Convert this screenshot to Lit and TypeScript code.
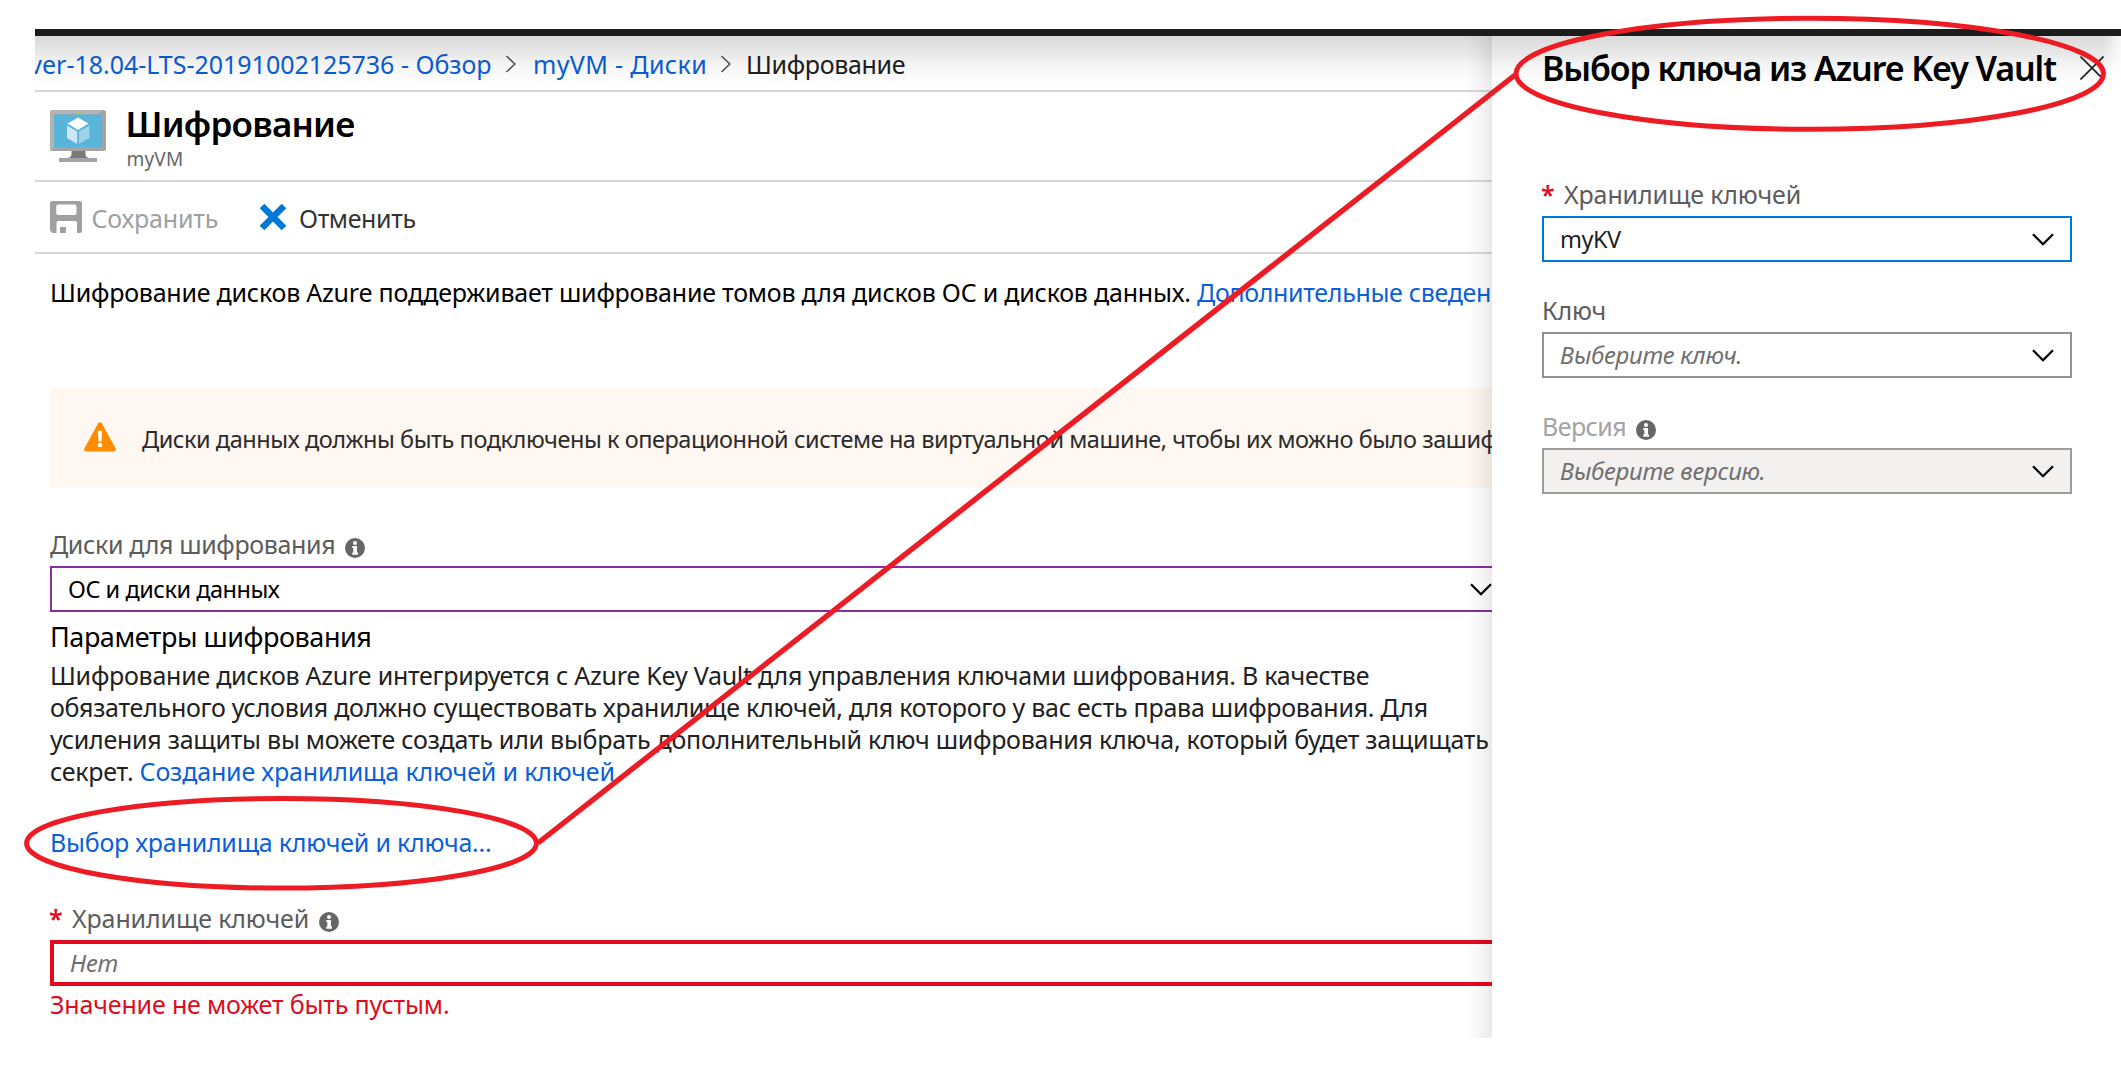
import { LitElement, html, css, svg } from 'lit';
import { customElement, property } from 'lit/decorators.js';
import { classMap } from 'lit/directives/class-map.js';

const chevronRight = html`<svg class="crumb-sep" viewBox="0 0 12 18" width="12" height="18">
  <path d="M1.5 1 9.8 9 1.5 17" fill="none" stroke="#5f5f5f" stroke-width="1.7" />
</svg>`;

const vmIcon = html`<svg viewBox="0 0 56 52" width="56" height="52">
  <rect x="0" y="0" width="56" height="41" rx="2.5" fill="#a3a3a3" />
  <path d="M0 2.5Q0 0 2.5 0H53L48 4.5H4V38L1 41Q0 40 0 38.5Z" fill="#b3b3b3" />
  <rect x="4" y="4.5" width="48" height="32.5" fill="#59b4d9" />
  <circle cx="28" cy="2.6" r="1" fill="#b8d432" />
  <path d="M28 7.5 38.5 13.5 28 20 17.5 13.5Z" fill="#fff" />
  <path d="M17 15.5 27.2 21.5V34L17 28Z" fill="#cde8f4" />
  <path d="M39.5 15.5 29 21.5V34L39.5 28Z" fill="#9fd3ea" />
  <path d="M21.5 41H35.5V44.5Q36 47.5 39 48H17.5Q21 47.5 21.5 44.5Z" fill="#7a7a7a" />
  <rect x="9" y="48" width="38" height="4" fill="#a3a3a3" />
</svg>`;

const saveIcon = html`<svg viewBox="0 0 32 32" width="32" height="32">
  <path fill-rule="evenodd" fill="#a0a0a0"
    d="M2.5 0H29.5Q32 0 32 2.500V29.500Q32 32 29.500 32H27V22Q27 20 25 20H8.500Q6.500 20 6.500 22V32H2.500L0 29.500V2.500Q0 0 2.500 0ZM8.200 3.500Q6.200 3.500 6.200 5.500V12Q6.200 14 8.200 14H24.500Q26.500 14 26.500 12V5.500Q26.500 3.500 24.500 3.500Z" />
  <rect x="10" y="26" width="6" height="6" fill="#a0a0a0" />
</svg>`;

const cancelIcon = html`<svg viewBox="0 0 28 28" width="28" height="28">
  <path d="M3 3 25 25M25 3 3 25" stroke="#0078d7" stroke-width="6.600" fill="none" />
</svg>`;

const warningIcon = html`<svg viewBox="0 0 32 30" width="32" height="30">
  <path d="M14.200 1.200Q16 -0.800 17.800 1.200L31.700 26.500Q32.300 29.300 29.700 29.500H2.300Q-0.300 29.300 0.300 26.500Z" fill="#ff8c00" />
  <path d="M13.900 8.800H18.100L17.500 19.500H14.500Z" fill="#fff" />
  <circle cx="16" cy="23" r="2.300" fill="#fff" />
</svg>`;

const infoIcon = html`<svg class="info" viewBox="0 0 20 20" width="20" height="20">
  <circle cx="10" cy="10" r="10" fill="#666" />
  <circle cx="10" cy="5" r="2" fill="#fff" />
  <path d="M7.300 8H12V14.500H13V16.800H7.300V14.500H8.300V10H7.300Z" fill="#fff" />
</svg>`;

const chevronDown = html`<svg viewBox="0 0 22 13" width="22" height="13">
  <path d="M1 1.200 11 11.200 21 1.200" fill="none" stroke="#000" stroke-width="2.300" />
</svg>`;

@customElement('azure-field')
class AzureField extends LitElement {
  @property() label = '';
  @property() value = '';
  @property() kind = 'normal';
  @property({ type: Boolean }) required = false;
  @property({ type: Boolean }) info = false;
  @property({ type: Boolean }) placeholder = false;

  static styles = css`
    :host { display: flex; flex-direction: column; gap: 6px; }
    .label {
      display: flex; align-items: center; height: 32px;
      font-size: 25px; line-height: 32px; letter-spacing: -0.14px; color: #5c5c5c; white-space: nowrap;
    }
    .dense { letter-spacing: -0.36px; }
    .dim { color: #a3a3a3; letter-spacing: -0.56px; }
    .star { width: 23px; margin-left: -1px; color: #e3091d; font-size: 25px; font-weight: 600; letter-spacing: 0; }
    .info { margin: 8px 0 0 10px; flex: none; }
    .box {
      display: flex; align-items: center; justify-content: space-between; box-sizing: border-box;
      height: 46px; padding: 0 16px; border: 2px solid #919191;
      font-size: 24px; color: #1f1f1f; white-space: nowrap; background: #fff;
    }
    .text { letter-spacing: -0.29px; line-height: 40px; }
    .solid { font-size: 23.500px; letter-spacing: -0.470px; }
    .hint { font-style: italic; color: #707070; }
    .focus { border-color: #0078d7; }
    .changed { border-color: #8a2da5; color: #000; }
    .error { border: 4px solid #e3091d; }
    .disabled { background: #f3f1f0; border-color: #9d9d9d; }
  `;

  render() {
    const k = this.kind;
    return html`
      <div class=${classMap({ label: true, dim: k === 'disabled', dense: k === 'changed' })}>
        ${this.required ? html`<span class="star">*</span>` : null}
        <span>${this.label}</span>
        ${this.info ? infoIcon : null}
      </div>
      <div class=${classMap({ box: true, [k]: true })}>
        <span class=${classMap({ text: true, hint: this.placeholder, solid: !this.placeholder })}>${this.value}</span>
        ${k === 'error' ? null : chevronDown}
      </div>`;
  }
}

@customElement('app-root')
class AppRoot extends LitElement {
  static styles = css`
    :host {
      display: block; position: relative; width: 2121px; height: 1068px; overflow: hidden;
      background: #fff; font-family: "Noto Sans", "Open Sans", sans-serif; color: #212121;
    }
    svg { flex: none; display: block; }
    .frame { padding: 29px 0 0 35px; }
    .topbar { height: 7px; background: #1b1d1c; }
    .body { position: relative; display: grid; grid-template-columns: 1457px 629px; height: 1002px; overflow: hidden; }
    .top-shade {
      position: absolute; inset: 0 0 auto 0; height: 54px; pointer-events: none;
      background: linear-gradient(rgba(0,0,0,.145), rgba(0,0,0,.095) 30%, rgba(0,0,0,.04) 55%, rgba(0,0,0,.012) 78%, transparent);
      mask-image: linear-gradient(to left, rgba(0,0,0,.2), #000 18px);
    }
    .side-shade {
      position: absolute; top: 0; bottom: 0; left: 1431px; width: 26px;
      background: linear-gradient(to left, rgba(0,0,0,.085), rgba(0,0,0,.03) 50%, transparent);
    }
    .main { overflow: hidden; min-width: 0; white-space: nowrap; font-size: 25px; line-height: 32px; }
    .link { color: #0b5fd9; }
    .crumbs { display: flex; align-items: center; height: 54px; border-bottom: 2px solid #d6d6d6; }
    .crumb-first { width: 456.500px; display: flex; justify-content: flex-end; overflow: hidden; padding-top: 2px; letter-spacing: -0.02px; }
    .crumb-mid { width: 174px; padding-top: 2px; letter-spacing: 0.36px; margin: 0 13px 0 16px; }
    .crumb-last { padding-top: 2px; letter-spacing: -0.34px; margin-left: 14px; }
    .crumb-sep { margin-top: 2px; }
    .crumb-first + .crumb-sep { margin-left: 13.500px; }
    .head { display: flex; height: 88px; border-bottom: 2px solid #d6d6d6; padding-left: 15px; }
    .head svg { margin-top: 18px; }
    .titles { padding: 12px 0 0 19.500px; }
    .title { font-size: 35px; font-weight: 600; line-height: 40px; letter-spacing: -0.75px; color: #000; }
    .subtitle { font-size: 19px; line-height: 24px; margin: 3px 0 0 1px; color: #666; letter-spacing: .2px; }
    .tools { display: flex; align-items: center; height: 70px; border-bottom: 2px solid #d6d6d6; padding-left: 15px; }
    .tool { display: flex; align-items: center; }
    .save { color: #a0a0a0; width: 209px; gap: 9.500px; letter-spacing: -0.19px; }
    .cancel { color: #333; gap: 12px; letter-spacing: -0.39px; }
    .tool span { padding-top: 2px; }
    .content { padding: 22px 0 0 15px; }
    .intro { display: flex; color: #000; letter-spacing: -0.22px; }
    .intro-text { width: 1147px; flex: none; }
    .intro .link { letter-spacing: -0.33px; }
    .warn {
      display: flex; align-items: center; height: 100px; width: 1500px; margin-top: 80px; padding-left: 34px;
      box-sizing: border-box; background: #fff7f1; border-radius: 4px; gap: 26px;
      font-size: 23.500px; letter-spacing: -0.44px; color: #2b2b2b;
    }
    .warn svg { margin-bottom: 2px; }
    .warn span { padding-top: 2px; }
    .disks { margin-top: 40px; width: 1460px; }
    .h { font-size: 27px; color: #000; margin-top: 9px; letter-spacing: -0.45px; }
    .para { margin-top: 6px; letter-spacing: -0.26px; }
    .para div { height: 32px; }
    .para .link { letter-spacing: -0.17px; }
    .pick { margin-top: 39px; letter-spacing: -0.23px; }
    .vault { margin-top: 44px; width: 1500px; }
    .err { color: #e00b1c; margin-top: 2px; letter-spacing: -0.16px; }
    .panel { background: #fff; padding: 12px 49px 0 50px; display: flex; flex-direction: column; }
    .panel-head { display: flex; justify-content: space-between; align-items: center; height: 41px; margin: 0 -32px 89px 0; }
    .panel-head svg { margin-bottom: 2px; }
    .panel-title { font-size: 34px; font-weight: 600; line-height: 41px; letter-spacing: -1.09px; color: #000; white-space: nowrap; }
    .fields { display: flex; flex-direction: column; gap: 32px; }
    .marks { position: absolute; inset: 0; pointer-events: none; }
  `;

  render() {
    return html`
      <div class="frame">
        <div class="topbar"></div>
        <div class="body">
          <div class="main">
            <div class="crumbs">
              <div class="crumb-first link"><span>ver-18.04-LTS-20191002125736 - Обзор</span></div>
              ${chevronRight}
              <span class="crumb-mid link">myVM - Диски</span>
              ${chevronRight}
              <span class="crumb-last">Шифрование</span>
            </div>
            <div class="head">
              ${vmIcon}
              <div class="titles">
                <div class="title">Шифрование</div>
                <div class="subtitle">myVM</div>
              </div>
            </div>
            <div class="tools">
              <div class="tool save">${saveIcon}<span>Сохранить</span></div>
              <div class="tool cancel">${cancelIcon}<span>Отменить</span></div>
            </div>
            <div class="content">
              <div class="intro">
                <span class="intro-text">Шифрование дисков Azure поддерживает шифрование томов для дисков ОС и дисков данных.</span>
                <span class="link">Дополнительные сведения</span>
              </div>
              <div class="warn">
                ${warningIcon}
                <span>Диски данных должны быть подключены к операционной системе на виртуальной машине, чтобы их можно было зашифровать.</span>
              </div>
              <azure-field class="disks" kind="changed" label="Диски для шифрования" value="ОС и диски данных" info></azure-field>
              <div class="h">Параметры шифрования</div>
              <div class="para">
                <div>Шифрование дисков Azure интегрируется с Azure Key Vault для управления ключами шифрования. В качестве</div>
                <div>обязательного условия должно существовать хранилище ключей, для которого у вас есть права шифрования. Для</div>
                <div>усиления защиты вы можете создать или выбрать дополнительный ключ шифрования ключа, который будет защищать</div>
                <div>секрет. <span class="link">Создание хранилища ключей и ключей</span></div>
              </div>
              <div class="pick link">Выбор хранилища ключей и ключа...</div>
              <azure-field class="vault" kind="error" label="Хранилище ключей" value="Нет" required info placeholder></azure-field>
              <div class="err">Значение не может быть пустым.</div>
            </div>
          </div>
          <div class="panel">
            <div class="panel-head">
              <span class="panel-title">Выбор ключа из Azure Key Vault</span>
              <svg viewBox="0 0 24 24" width="24" height="24">
                <path d="M.5 .5 23.500 23.500M23.500 .5 .5 23.500" stroke="#1f1f1f" stroke-width="1.600" />
              </svg>
            </div>
            <div class="fields">
              <azure-field kind="focus" label="Хранилище ключей" value="myKV" required></azure-field>
              <azure-field label="Ключ" value="Выберите ключ." placeholder></azure-field>
              <azure-field kind="disabled" label="Версия" value="Выберите версию." info placeholder></azure-field>
            </div>
          </div>
          <div class="side-shade"></div>
          <div class="top-shade"></div>
        </div>
      </div>
      <svg class="marks" viewBox="0 0 2121 1068" width="2121" height="1068" fill="none" stroke="#ed1c24" stroke-width="5">
        ${svg`<ellipse cx="1809.700" cy="73.800" rx="293.700" ry="55.500" />
        <ellipse cx="281.500" cy="843.300" rx="254.900" ry="44.800" />
        <path d="M538 843 1515 75" stroke-width="5.400" />`}
      </svg>`;
  }
}
